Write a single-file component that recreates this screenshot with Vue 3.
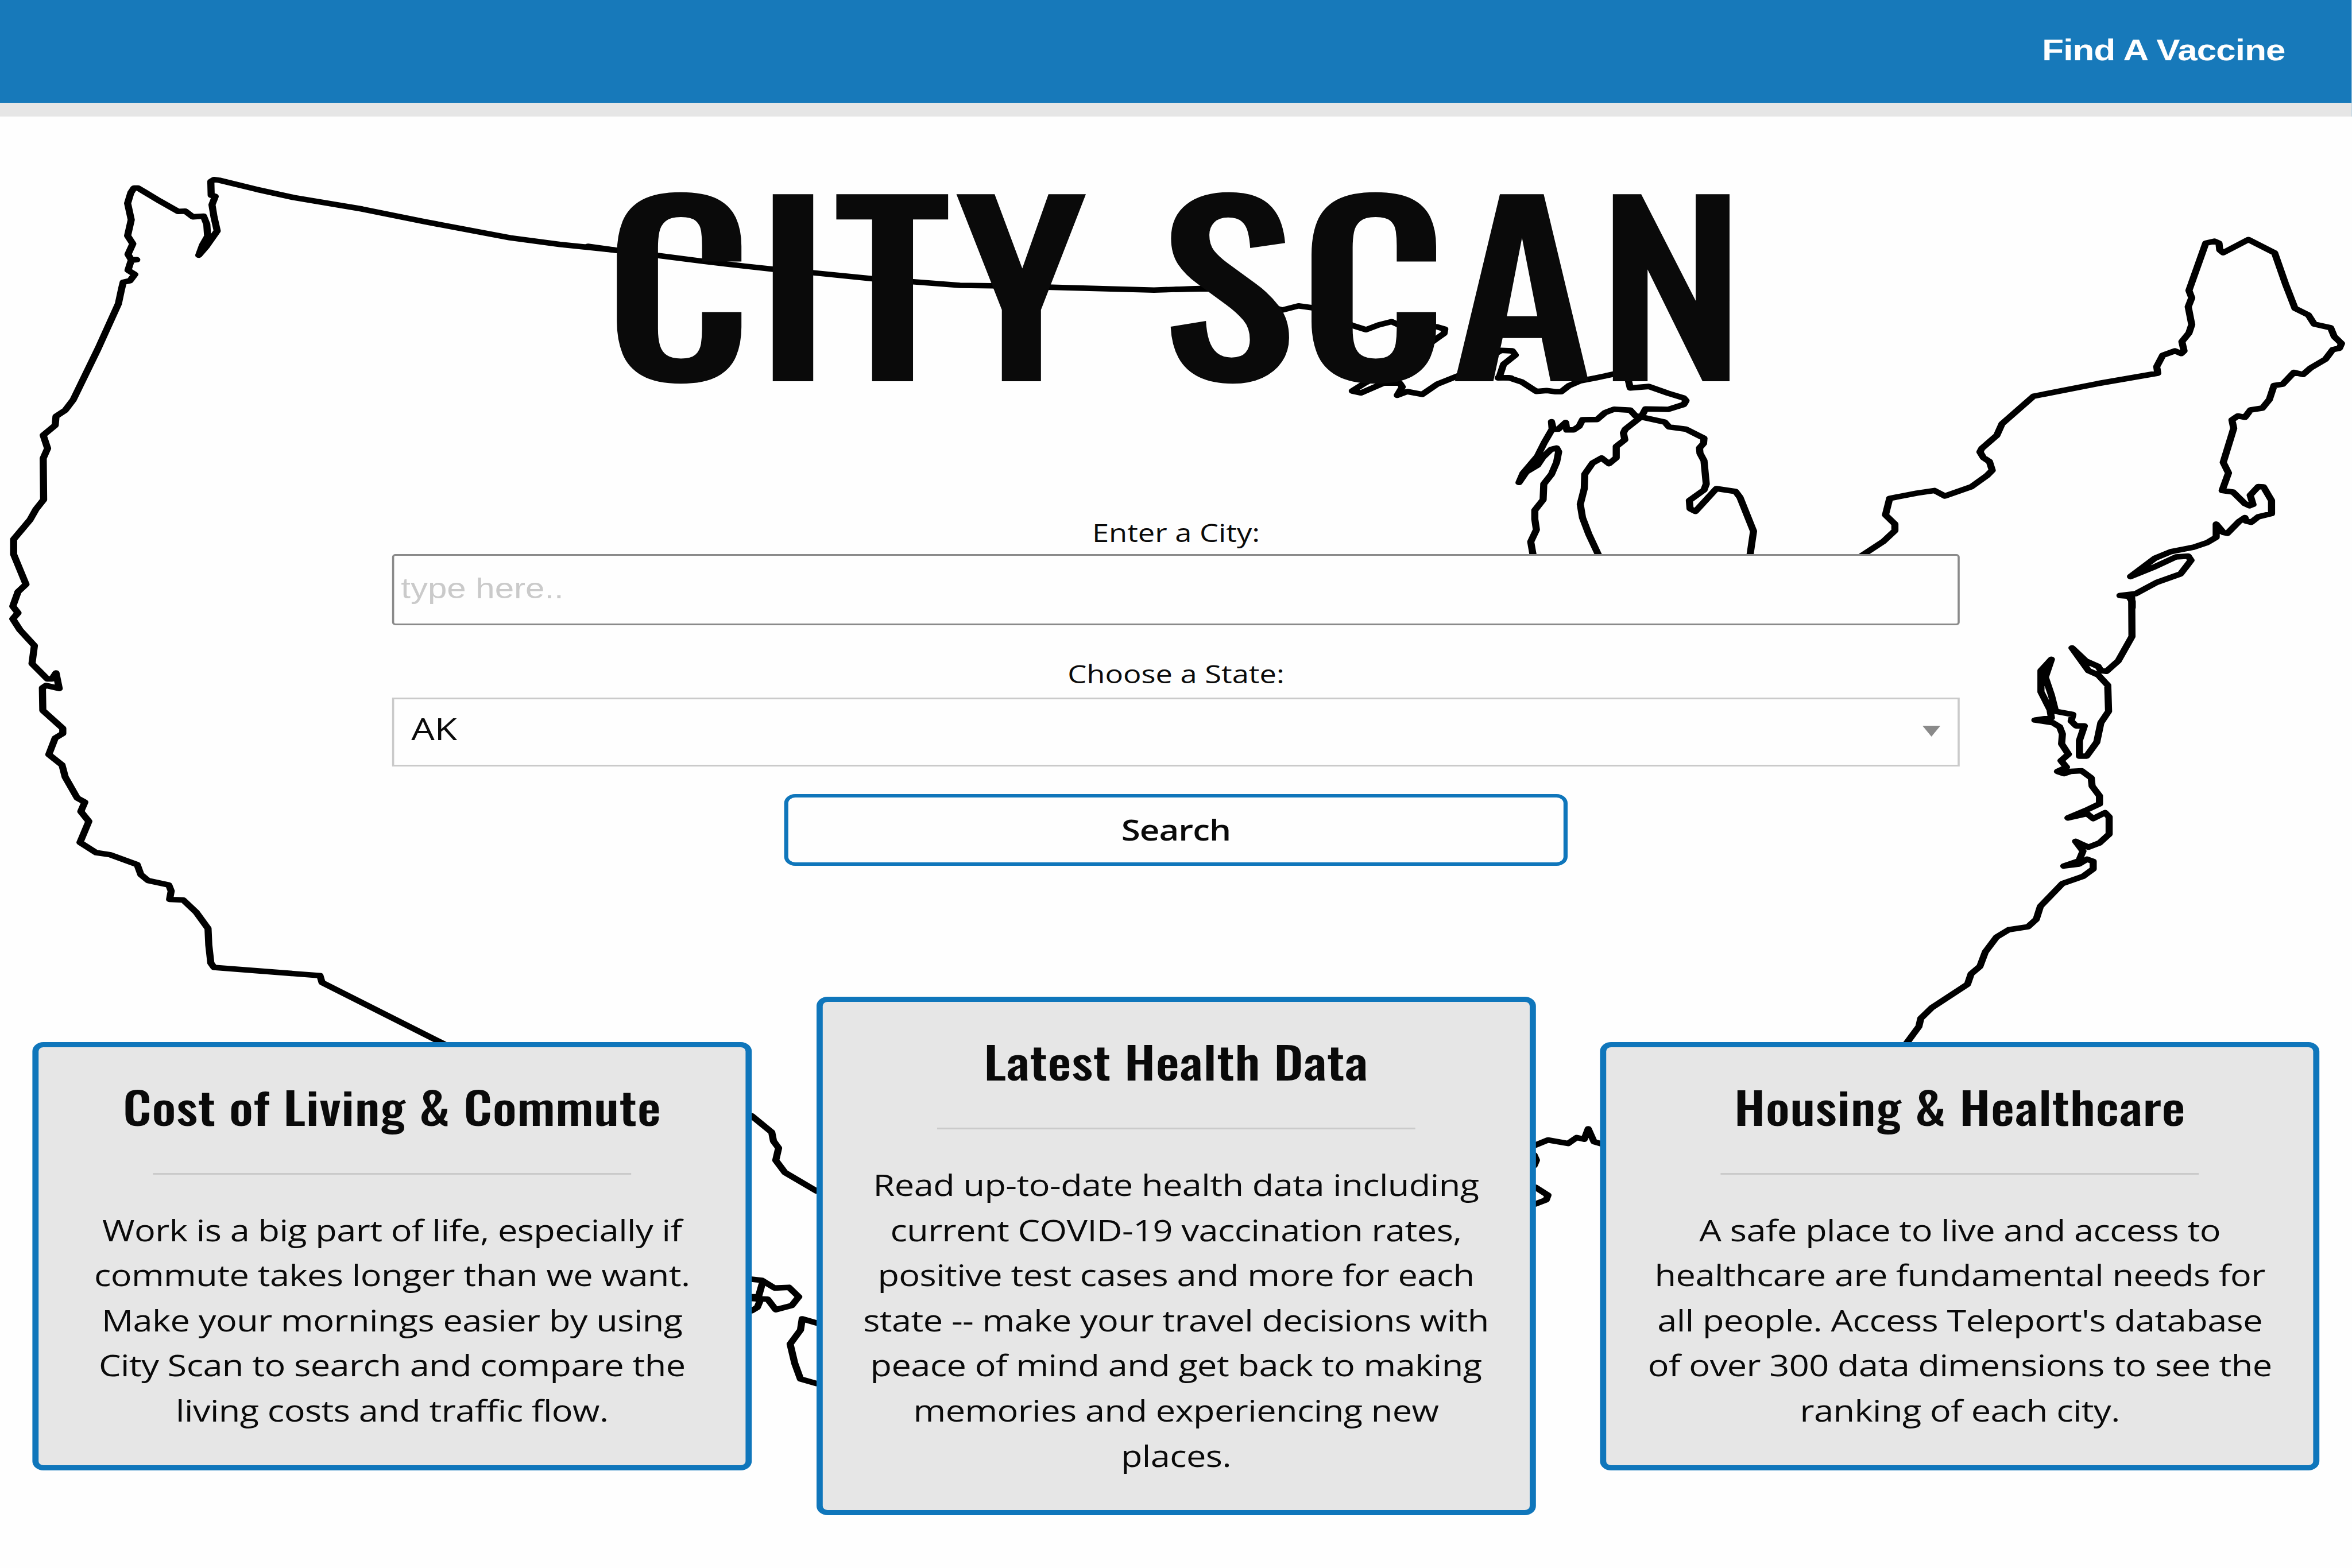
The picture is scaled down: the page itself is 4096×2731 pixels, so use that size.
<script setup>
// Coastline and border runs. Each sheet has its own origin and step size.
const sheets = [
  { x: 0, y: 400, kx: 1.0204, ky: 0.7653, runs: [
    '1545,312 1400,292 1275,270 1060,216 905,174 735,136 640,108 548,78 535,76 527,82 528,128 538,132 530,160 535,200 543,247 515,300 497,328 506,295 519,265 517,225 509,198 482,200 463,181 445,182 400,148 345,104 335,104 327,120 319,155 328,210 319,263 332,290 320,325 328,343 342,343 328,345 320,378 337,392 325,413 308,418 304,440 296,490 245,640 183,810 163,845 140,865 138,895 108,928 119,972 108,1005 109,1143 90,1175 75,1210 34,1275 34,1325 65,1425 45,1450'
  ] },
  { x: 0, y: 1500, kx: 1.0204, ky: 0.7653, runs: [
    '45,13 32,61 45,83 32,103 50,140 86,192 80,252 118,303 130,303 140,283 148,335 115,325 106,333 107,408 157,468 157,485 138,500 122,555 155,590 163,630 193,700 212,714 202,745 222,778 200,848 240,882 275,889 343,922 352,955 370,975 422,990 428,1010 424,1038 458,1040 490,1080 520,1135 522,1190 527,1250 535,1265 800,1292 805,1315 1110,1520'
  ] },
  { x: 1500, y: 400, kx: 1.0204, ky: 0.6378, runs: [
    '0,358 72,374 172,394 288,418 390,437 464,450 564,464 712,488 813,500 930,514 1010,516 1160,522 1415,533 1530,527'
  ] },
  { x: 3000, y: 700, kx: 0.6378, ky: 0.4783, runs: [
    '0,80 130,77 425,190 490,168 545,178 705,272 760,295 810,270 862,252 895,272 1045,280 1075,292 1072,315 1045,340 900,480 755,580 705,622 740,632 830,580 895,580 905,600 885,645 925,625 985,640 1045,585 1130,540 1220,470 1300,405 1345,408 1357,430 1310,480 1295,540 1290,550 1340,552'
  ] },
  { x: 3750, y: 850, kx: 0.574, ky: 0.3827, runs: [
    '125,298 170,296 230,325 295,388 340,382 380,390 405,390 440,350 490,318 560,298 640,272 700,290 712,365 795,355 880,400 950,432 960,450 950,475 880,508 780,505 762,555 690,640 682,665 688,710 650,755 650,830 618,870 585,832 545,865 510,940 508,1035 490,1140 500,1230 528,1340 570,1475',
    '280,1475 270,1390 295,1310 288,1240 288,1180 325,1110 328,1005 362,940 385,860 394,790 385,765 360,775 325,825 300,880 250,925 218,995 235,935 300,820 330,730 365,640 362,590 370,640 392,640 425,595 430,645 460,645 485,620 500,577 565,575 600,530 640,507 712,513 735,550 780,565 865,592 885,625 960,640 1040,700 1038,735 1020,765 1022,800 1040,850 1050,1005 1040,1045 975,1115 978,1170 1002,1188 1095,1036 1180,1055 1200,1095 1260,1320 1245,1475'
  ] },
  { x: 4600, y: 500, kx: 0.8929, ky: 0.6696, runs: [
    '165,1372 190,1350 230,1315 262,1275 262,1250 235,1215 247,1152 325,1132 375,1122 405,1143 480,1108 525,1065 540,1045 532,1012 515,997 505,975 510,962 553,912 568,868 658,763 840,715 1013,675 1010,650 1027,607 1062,590 1080,600 1088,590 1082,555 1102,522 1110,490 1100,422 1110,388 1102,360 1150,180 1175,172 1188,180 1190,205 1200,216 1272,166 1347,217 1378,335 1405,428 1443,453 1460,488 1507,502 1517,535 1538,562 1532,580 1513,585 1492,622 1450,655 1428,680 1402,672 1370,717 1345,722 1332,775 1312,808 1278,815 1262,843 1242,838 1225,853 1230,885 1200,1015 1215,1055 1197,1122 1228,1128 1262,1172 1275,1180 1285,1175 1277,1140 1300,1107 1315,1108 1338,1160 1338,1210 1300,1222 1280,1243 1265,1238 1262,1225 1245,1240 1212,1285 1200,1282 1180,1250 1180,1300 1155,1320 1115,1338 1050,1355 1005,1380 975,1410 935,1450 1000,1415 1065,1375 1100,1372 1108,1388 1078,1440 1010,1472 950,1515 905,1522 930,1525 940,1545 940,1568'
  ] },
  { x: 4700, y: 1400, kx: 0.7015, ky: 0.8291, runs: [
    '1052,150 1053,270 1003,345 960,377 940,375 930,362 885,345 835,305 865,340 895,375 930,388 965,420 968,500 940,535 925,595 888,638 862,638 862,590 880,545 850,545 832,530 838,510 775,500 760,450 738,395 760,340 722,375 722,440 755,495 760,520 700,527 765,535 790,548 800,570 797,600 822,632 795,652 815,672 782,685 805,692 830,685 870,683 905,705 908,730 935,760 935,785 885,805 820,828 890,815 912,830 955,812 970,825 970,878 935,905 895,918 868,908 848,900 875,930 860,960 805,976 860,970 890,955 912,962 912,985 875,1008 800,1030 720,1100 705,1140 675,1163 605,1172 560,1195 520,1240 500,1285 468,1308 455,1340 325,1412 285,1445 278,1470 230,1525'
  ] },
  { x: 1800, y: 2500, kx: 1.4668, ky: 0.8929, runs: [
    '80,388 115,435 118,460 127,480 122,515 138,550 193,603',
    '80,855 98,858 120,880 145,878 162,905 150,930 122,942 108,912 80,910',
    '98,870 92,905 80,905 95,915 90,935 80,945',
    '193,980 168,968 165,1000 147,1040 155,1095 165,1140 193,1153',
    '1443,472 1465,457 1500,467 1515,450 1528,455 1535,425 1545,462 1558,468',
    '1441,500 1445,515 1441,530',
    '1443,592 1465,615 1462,628 1443,640'
  ] }
]

const PEN = 1.3 // the pen is wider than it is tall
const lines = sheets.flatMap(s => s.runs.map(run => run.split(' ').map(p => {
  const [px, py] = p.split(',').map(Number)
  return `${((s.x + px * s.kx) / PEN).toFixed(1)},${(s.y + py * s.ky).toFixed(1)}`
}).join(' ')))

const cards = [
  { title: 'Cost of Living & Commute', text: ['Work is a big part of life, especially if', 'commute takes longer than we want.', 'Make your mornings easier by using', 'City Scan to search and compare the', 'living costs and traffic flow.'] },
  { title: 'Latest Health Data', text: ['Read up-to-date health data including', 'current COVID-19 vaccination rates,', 'positive test cases and more for each', 'state -- make your travel decisions with', 'peace of mind and get back to making', 'memories and experiencing new', 'places.'] },
  { title: 'Housing & Healthcare', text: ['A safe place to live and access to', 'healthcare are fundamental needs for', "all people. Access Teleport's database", 'of over 300 data dimensions to see the', 'ranking of each city.'] }
]
</script>

<template>
  <div class="page">
    <svg class="map" viewBox="0 0 6000 4000" preserveAspectRatio="none">
      <g :transform="`scale(${PEN} 1)`">
        <polyline v-for="(l, i) in lines" :key="i" :points="l" />
      </g>
    </svg>
    <header class="bar"><a class="link">Find A Vaccine</a></header>
    <h1 class="title">CITY SCAN</h1>
    <form class="search" @submit.prevent>
      <label class="label">Enter a City:</label>
      <div class="field city">type here..</div>
      <label class="label second">Choose a State:</label>
      <div class="field state"><span>AK</span><i class="arrow"></i></div>
      <button class="button">Search</button>
    </form>
    <section class="cards">
      <article v-for="c in cards" :key="c.title" class="card">
        <h3 class="card-title">{{ c.title }}</h3>
        <hr class="rule" />
        <p class="copy"><template v-for="(t, i) in c.text" :key="i">{{ t }}<br /></template></p>
      </article>
    </section>
  </div>
</template>

<style>
html, body { margin: 0; background: #fefefe; overflow: hidden; }
</style>

<style scoped>
.page {
  position: relative;
  width: 3413.34px;
  height: 2731px;
  transform: scaleX(1.2);
  transform-origin: 0 0;
  overflow: hidden;
  background: #fefefe;
  color: #0a0a0a;
  font-family: "Open Sans", "Noto Sans", sans-serif;
}
.map { position: absolute; inset: 0; width: 100%; height: 100%; }
.map polyline { fill: none; stroke: #000; stroke-width: 14; stroke-linejoin: round; stroke-linecap: round; }
.bar {
  position: relative;
  box-sizing: border-box;
  height: 203px;
  border-bottom: 24px solid #e6e6e6;
  background: #1779ba;
  display: flex;
  justify-content: flex-end;
  align-items: center;
  padding: 0 97px 6px 0;
}
.link { font: 700 51.5px/60px "Liberation Sans", Arial, sans-serif; letter-spacing: -.7px; color: #fefefe; }
.title {
  position: relative;
  margin: 0;
  height: 692px;
  text-align: center;
  white-space: nowrap;
  font: 550 402px/558px Oswald, sans-serif;
  letter-spacing: 2.6px;
}
.search { position: relative; width: 2275.6px; margin: 0 auto; display: flex; flex-direction: column; }
.label { height: 70px; font-size: 43.7px; line-height: 64.5px; text-align: center; }
.second { height: 74px; margin-top: 52px; }
.field { box-sizing: border-box; background: #fefefe; display: flex; align-items: center; }
.city {
  height: 124px;
  border: 3px solid #8a8a8a;
  border-radius: 5px;
  padding: 0 0 5px 10px;
  font: 50px/60px "Liberation Sans", Arial, sans-serif;
  color: #cacaca;
}
.state { height: 119.5px; border: 3px solid #cacaca; padding: 0 25.5px 0 25px; justify-content: space-between; font-size: 53.5px; line-height: 70px; }
.state span { margin-bottom: 12px; }
.arrow { border: 13px solid transparent; border-top: 19px solid #8a8a8a; border-bottom: 0; margin-bottom: 2px; }
.button {
  box-sizing: border-box;
  width: 1137px;
  height: 125px;
  margin: 48.5px auto 0;
  padding: 0 0 2px;
  border: 6px solid #0f76bb;
  border-radius: 16px;
  background: #fefefe;
  font: 600 50px/70px "Open Sans", sans-serif;
  letter-spacing: -.8px;
  color: #0a0a0a;
}
.cards { position: relative; margin: 228px 47px 0; display: flex; justify-content: space-between; align-items: center; }
.card {
  box-sizing: border-box;
  width: 1044px;
  border: 9.2px solid #0f76bb;
  border-radius: 16px;
  background: #e6e6e6;
  padding: 42px 0 56px;
  text-align: center;
}
.card-title { margin: 0; height: 177px; white-space: nowrap; font: 500 77px/120px Oswald, sans-serif; letter-spacing: .5px; }
.rule { width: 694px; height: 3px; border: 0; margin: 0 auto 57px; background: #cacaca; }
.copy { margin: 0; font-size: 51px; line-height: 78.6px; letter-spacing: -.45px; white-space: nowrap; }
</style>
